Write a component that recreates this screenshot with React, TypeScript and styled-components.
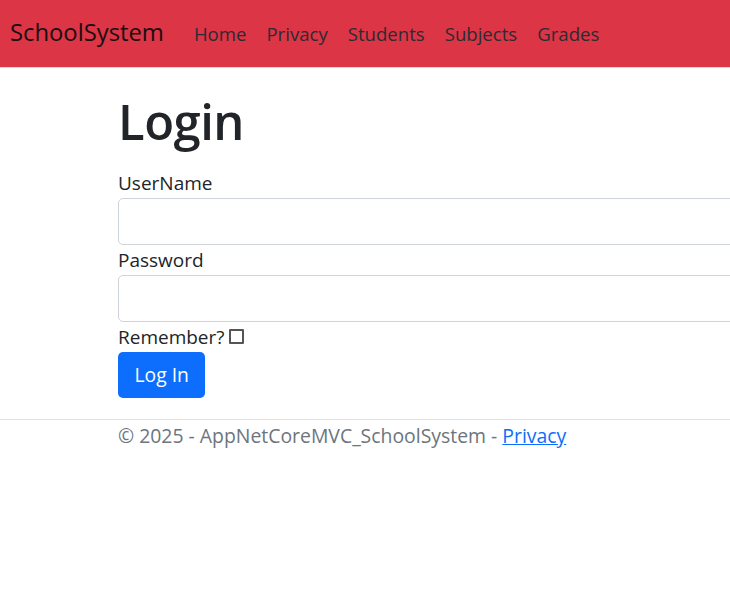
import React from "react";
import styled, { createGlobalStyle } from "styled-components";

const Global = createGlobalStyle`
  html, body { margin: 0; padding: 0; overflow: hidden; background: #fff; }
  body {
    font-family: "Open Sans", "Noto Sans", sans-serif;
    font-size: 19px;
    line-height: 1.5;
    color: #212529;
  }
  * { box-sizing: border-box; }
`;

const Navbar = styled.nav`
  height: 68px;
  background: #dc3545;
  display: flex;
  align-items: baseline;
  padding: 15px 10px 0;
  border-bottom: 1px solid #e0dada;
`;

const Brand = styled.a`
  font-size: 23.8px;
  line-height: 1.5;
  color: #1a0e12;
  text-decoration: none;
  margin-right: 20px;
`;

const NavList = styled.ul`
  list-style: none;
  display: flex;
  align-items: baseline;
  margin: 0;
  padding: 0;
`;

const NavLink = styled.a`
  display: block;
  padding: 0 10px;
  font-size: 18.6px;
  line-height: 1.5;
  color: #2e2a33;
  text-decoration: none;
`;

const Container = styled.main`
  padding-left: 118px;
  padding-top: 20px;
  width: 900px;
  padding-bottom: 21px;
`;

const Title = styled.h1`
  margin: 3px 0 17px;
  font-size: 49px;
  font-weight: 600;
  line-height: 60px;
  letter-spacing: -0.5px;
`;

const Label = styled.label`
  display: block;
  line-height: 30px;
  height: 30px;
`;

const Input = styled.input`
  display: block;
  width: 100%;
  height: 47px;
  border: 1px solid #ced4da;
  border-radius: 5px;
  font: inherit;
  padding: 7px 15px;
`;

const CheckRow = styled.div`
  display: flex;
  align-items: center;
  line-height: 30px;
  height: 30px;
`;

const Check = styled.input`
  appearance: none;
  width: 15px;
  height: 15px;
  margin: 0 0 2px 4px;
  border: 2px solid #555;
  border-radius: 1px;
  background: #fff;
`;

const Button = styled.button`
  display: block;
  height: 46px;
  padding: 0 16.5px;
  border: none;
  border-radius: 5px;
  background: #0d6efd;
  color: #fff;
  font: inherit;
  font-size: 19.3px;
`;

const Footer = styled.footer`
  border-top: 1px solid #dee2e6;
  padding-left: 118px;
  line-height: 32px;
  font-size: 19.4px;
  color: #6c757d;
  white-space: nowrap;
`;

const FooterLink = styled.a`
  color: #0d6efd;
  text-decoration: underline;
`;

export default function App() {
  const links = ["Home", "Privacy", "Students", "Subjects", "Grades"];
  return (
    <>
      <Global />
      <Navbar>
        <Brand href="#">SchoolSystem</Brand>
        <NavList>
          {links.map((l) => (
            <li key={l}>
              <NavLink href="#">{l}</NavLink>
            </li>
          ))}
        </NavList>
      </Navbar>
      <Container>
        <Title>Login</Title>
        <form>
          <Label htmlFor="u">UserName</Label>
          <Input id="u" type="text" />
          <Label htmlFor="p">Password</Label>
          <Input id="p" type="password" />
          <CheckRow>
            <span>Remember?</span>
            <Check type="checkbox" />
          </CheckRow>
          <Button type="button">Log In</Button>
        </form>
      </Container>
      <Footer>
        © 2025 - AppNetCoreMVC_SchoolSystem - <FooterLink href="#">Privacy</FooterLink>
      </Footer>
    </>
  );
}
